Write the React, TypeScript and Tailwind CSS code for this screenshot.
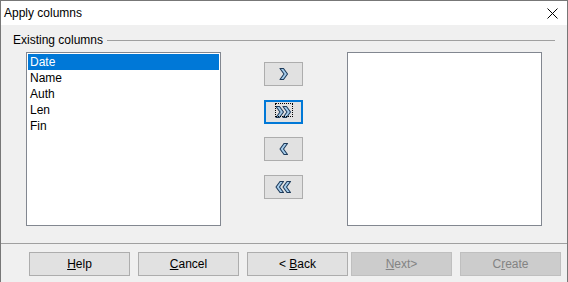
import React from "react";

const font = { fontFamily: '"Liberation Sans", Arial, sans-serif' };

function Chevron({ dir, x }: { dir: "r" | "l"; x: number }) {
  const pts =
    dir === "r"
      ? `${x + 1},0.5 ${x + 4.5},0.5 ${x + 8.5},6 ${x + 4.5},11.5 ${x + 1},11.5 ${x + 5},6`
      : `${x + 8.5},0.5 ${x + 5},0.5 ${x + 1},6 ${x + 5},11.5 ${x + 8.5},11.5 ${x + 4.5},6`;
  return <polygon points={pts} fill="#a6cdec" stroke="#1d3a5a" strokeWidth="1.1" strokeLinejoin="round" />;
}

function MoveButton({ kind, focused, className }: { kind: "r" | "rr" | "l" | "ll"; focused?: boolean; className?: string }) {
  const double = kind === "rr" || kind === "ll";
  const dir = kind[0] as "r" | "l";
  return (
    <div
      className={
        "relative flex h-[24px] w-[39px] items-center justify-center bg-[#e1e1e1] " +
        (focused ? "border-2 border-[#0078d7]" : "border border-[#adadad]") +
        " " +
        (className ?? "")
      }
    >
      {focused && <div className="absolute left-[9px] top-[1px] h-[14px] w-[18px] border border-dotted border-black" />}
      <svg width={double ? 17 : 10} height="12" viewBox={double ? "0 0 17 12" : "0 0 10 12"}>
        {double ? (
          <>
            <Chevron dir={dir} x={0} />
            <Chevron dir={dir} x={7} />
          </>
        ) : (
          <Chevron dir={dir} x={0} />
        )}
      </svg>
    </div>
  );
}

function DlgButton({ children, disabled }: { children: React.ReactNode; disabled?: boolean }) {
  return (
    <div
      className={
        "flex h-[24px] w-[101px] items-center justify-center border text-[12px] " +
        (disabled ? "border-[#bfbfbf] bg-[#cccccc] text-[#838383]" : "border-[#adadad] bg-[#e1e1e1] text-black")
      }
    >
      {children}
    </div>
  );
}

export default function App() {
  const items = ["Date", "Name", "Auth", "Len", "Fin"];
  return (
    <div style={font} className="flex h-[282px] w-[568px] flex-col border-l border-r border-t border-[#777777] bg-[#f0f0f0] text-[12px] text-black">
      <div className="flex h-[24px] items-center justify-between bg-white pl-[3px] pr-[9px]">
        <span>Apply columns</span>
        <svg width="11" height="11" viewBox="0 0 11 11">
          <path d="M0.5 0.5 L10.5 10.5 M10.5 0.5 L0.5 10.5" stroke="#000" strokeWidth="1" />
        </svg>
      </div>

      <div className="flex flex-1 flex-col">
        <div className="flex items-center pl-[12px] pr-[12px] pt-[8px] leading-[14px]">
          <span>Existing columns</span>
          <div className="ml-[4px] h-px flex-1 bg-[#a0a0a0]" />
        </div>

        <div className="mt-[5px] flex pl-[25px]">
          <div className="h-[174px] w-[195px] border border-[#828790] bg-white p-px">
            {items.map((it, i) => (
              <div
                key={it}
                className={"h-[16px] pl-[2px] leading-[16px] " + (i === 0 ? "bg-[#0078d7] text-white" : "")}
              >
                {it}
              </div>
            ))}
          </div>

          <div className="ml-[43px] flex flex-col pt-[10px]">
            <MoveButton kind="r" />
            <MoveButton kind="rr" focused className="mt-[14px]" />
            <MoveButton kind="l" className="mt-[13px]" />
            <MoveButton kind="ll" className="mt-[14px]" />
          </div>

          <div className="ml-[44px] h-[174px] w-[195px] border border-[#828790] bg-white" />
        </div>
      </div>

      <div className="flex h-[39px] border-t border-[#a0a0a0] pl-[28px] pt-[8px]">
        <DlgButton>
          <u>H</u>elp
        </DlgButton>
        <div className="ml-[8px]">
          <DlgButton>
            <u>C</u>ancel
          </DlgButton>
        </div>
        <div className="ml-[8px]">
          <DlgButton>
            &lt;&nbsp;<u>B</u>ack
          </DlgButton>
        </div>
        <div className="ml-[3px]">
          <DlgButton disabled>
            <u>N</u>ext&gt;
          </DlgButton>
        </div>
        <div className="ml-[8px]">
          <DlgButton disabled>
            C<u>r</u>eate
          </DlgButton>
        </div>
      </div>
    </div>
  );
}
